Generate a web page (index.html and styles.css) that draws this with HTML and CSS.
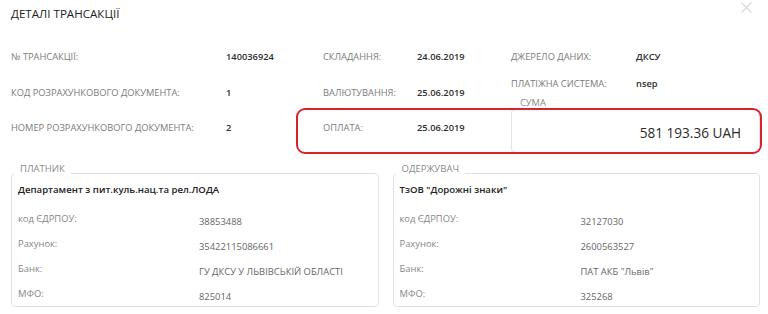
FILE: index.html
```html
<!DOCTYPE html>
<html lang="uk">
<head>
<meta charset="utf-8">
<title>Деталі трансакції</title>
<link rel="stylesheet" href="styles.css">
</head>
<body>
<div class="modal">
  <div class="head">
    <h1 class="title">ДЕТАЛІ ТРАНСАКЦІЇ</h1>
    <span class="close" aria-label="close">
      <svg width="11" height="11" viewBox="0 0 11 11"><path d="M0.5 0.5L10.5 10.5M10.5 0.5L0.5 10.5" stroke="#dcdcdc" stroke-width="1.3" fill="none"/></svg>
    </span>
  </div>

  <div class="summary">
    <div class="grid">
      <span class="lbl">№ ТРАНСАКЦІЇ:</span><span class="val">140036924</span>
      <span class="lbl">СКЛАДАННЯ:</span><span class="val">24.06.2019</span>
      <span class="lbl">КОД РОЗРАХУНКОВОГО ДОКУМЕНТА:</span><span class="val">1</span>
      <span class="lbl">ВАЛЮТУВАННЯ:</span><span class="val">25.06.2019</span>
      <span class="lbl">НОМЕР РОЗРАХУНКОВОГО ДОКУМЕНТА:</span><span class="val">2</span>
      <span class="lbl">ОПЛАТА:</span><span class="val">25.06.2019</span>
    </div>
    <div class="side">
      <div class="srow"><span class="lbl slbl">ДЖЕРЕЛО ДАНИХ:</span><span class="val">ДКСУ</span></div>
      <div class="srow second"><span class="lbl slbl">ПЛАТІЖНА СИСТЕМА:</span><span class="val">nsep</span></div>
      <div class="sum-label">СУМА</div>
      <div class="sum-box">581 193.36 UAH</div>
    </div>
  </div>

  <div class="parties">
    <fieldset class="party">
      <legend>ПЛАТНИК</legend>
      <div class="pname">Департамент з пит.куль.нац.та рел.ЛОДА</div>
      <div class="prow"><span class="plbl">код ЄДРПОУ:</span><span class="pval">38853488</span></div>
      <div class="prow"><span class="plbl">Рахунок:</span><span class="pval">35422115086661</span></div>
      <div class="prow"><span class="plbl">Банк:</span><span class="pval">ГУ ДКСУ У ЛЬВІВСЬКІЙ ОБЛАСТІ</span></div>
      <div class="prow"><span class="plbl">МФО:</span><span class="pval">825014</span></div>
    </fieldset>
    <fieldset class="party">
      <legend>ОДЕРЖУВАЧ</legend>
      <div class="pname">ТзОВ "Дорожні знаки"</div>
      <div class="prow"><span class="plbl">код ЄДРПОУ:</span><span class="pval">32127030</span></div>
      <div class="prow"><span class="plbl">Рахунок:</span><span class="pval">2600563527</span></div>
      <div class="prow"><span class="plbl">Банк:</span><span class="pval">ПАТ АКБ "Львів"</span></div>
      <div class="prow"><span class="plbl">МФО:</span><span class="pval">325268</span></div>
    </fieldset>
  </div>

  <div class="highlight"></div>
</div>
</body>
</html>
```

FILE: styles.css
```css
* { box-sizing: border-box; }
html, body { margin: 0; padding: 0; background: #fff; }
body { font-family: "Open Sans", "Noto Sans", sans-serif; overflow: hidden; }

.modal { position: relative; width: 768px; height: 314px; }

.head { display: flex; justify-content: space-between; align-items: flex-start; padding: 7px 16px 0 11px; height: 21px; }
.title { margin: 0; font-size: 11.6px; font-weight: 400; line-height: 14px; color: #222; }
.close { display: block; margin-top: -5px; width: 11px; height: 11px; }
.close svg { display: block; }

.summary { display: flex; padding-left: 11px; margin-top: 29px; }
.grid { display: grid; grid-template-columns: 215px 97px 94px 94px; grid-template-rows: 36px 35px 35px; align-items: start; }
.lbl { font-size: 9.3px; line-height: 14px; color: #7b7b7b; white-space: nowrap; }
.val { font-size: 9.3px; line-height: 14px; color: #2e2e2e; font-weight: 600; white-space: nowrap; }

.side { width: 249px; display: flex; flex-direction: column; }
.srow { display: flex; height: 14px; }
.srow.second { margin-top: 13px; }
.slbl { width: 125px; }
.sum-label { margin-top: 5px; padding-left: 9px; font-size: 9.3px; line-height: 14px; color: #8a8a8a; margin-bottom: -1px; }
.sum-box { height: 44px; border: 1px solid #e4e4e8; border-radius: 4px; display: flex; align-items: center; justify-content: flex-end; padding-right: 18px; padding-top: 2px; font-size: 13.6px; color: #2a2a2a; }

.parties { display: flex; gap: 14px; padding: 0 8px 0 11px; margin-top: 7px; }
.party { flex: 1; margin: 0; min-width: 0; border: 1px solid #dfe1ee; border-radius: 4px; padding: 0 6px 3px; }
.party legend { margin-left: -4px; padding: 0 6px 8px; font-size: 9.5px; line-height: 12px; color: #8a8a8a; }
.pname { font-size: 9.6px; line-height: 14px; font-weight: 600; color: #222; margin-bottom: 15px; }
.prow { display: grid; grid-template-columns: 181px 1fr; height: 25px; }
.plbl { font-size: 9.4px; line-height: 14px; color: #858585; }
.pval { font-size: 9.4px; line-height: 14px; color: #666; padding-top: 3px; }
.prow:last-child { height: 16px; }

.highlight { position: absolute; left: 296px; top: 108px; width: 466px; height: 46px; border: 2.5px solid #d8232d; border-radius: 9px; pointer-events: none; }
```
